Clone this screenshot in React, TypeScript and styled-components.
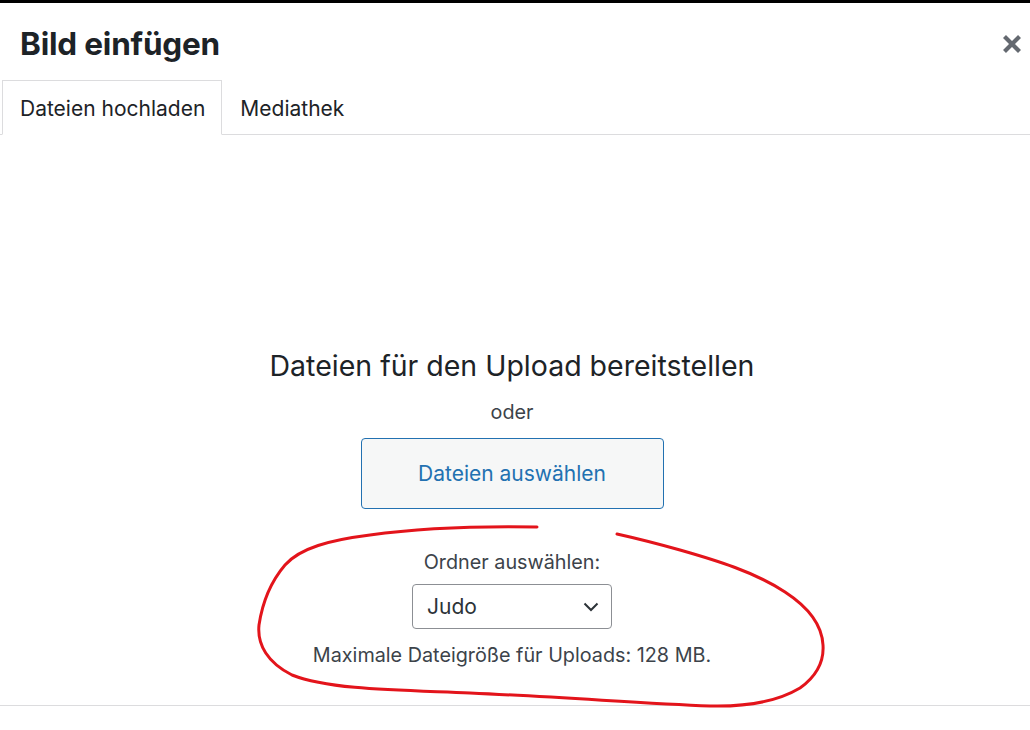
import React from "react";
import styled, { createGlobalStyle } from "styled-components";

const Global = createGlobalStyle`
  html, body { margin: 0; padding: 0; background: #fff; }
  body { font-family: Inter, "Noto Sans", "Liberation Sans", sans-serif; }
  * { box-sizing: border-box; }
`;

const Frame = styled.div`
  position: relative;
  width: 1030px;
  height: 730px;
  overflow: hidden;
  background: #fff;
  display: flex;
  flex-direction: column;
`;

const TopBar = styled.div`
  height: 3px;
  background: #000;
  flex: none;
`;

const Header = styled.header`
  height: 77px;
  flex: none;
  display: flex;
  align-items: center;
  justify-content: space-between;
  padding: 4px 5px 0 20px;
`;

const Title = styled.h1`
  margin: 0;
  font-size: 31.5px;
  font-weight: 700;
  color: #1d2327;
  letter-spacing: -0.2px;
`;

const CloseButton = styled.button`
  width: 26px;
  height: 26px;
  padding: 0;
  border: 0;
  background: transparent;
  display: flex;
  align-items: center;
  justify-content: center;
`;

const TabBar = styled.nav`
  height: 55px;
  flex: none;
  display: flex;
  padding-left: 2px;
  border-bottom: 1px solid #dcdcde;
`;

const Tab = styled.div<{ $active?: boolean }>`
  display: flex;
  align-items: center;
  padding: 2px 16px 0 17px;
  margin-bottom: ${(p) => (p.$active ? "-1px" : "0")};
  font-size: 21px;
  color: #1d2327;
  background: ${(p) => (p.$active ? "#fff" : "transparent")};
  border: 1px solid ${(p) => (p.$active ? "#dcdcde" : "transparent")};
  border-bottom: ${(p) => (p.$active ? "1px solid #fff" : "0")};
`;

const Content = styled.main`
  flex: 1;
  display: flex;
  flex-direction: column;
  align-items: center;
  padding: 213px 6px 0 0;
`;

const UploadHeading = styled.h2`
  margin: 0;
  font-size: 28.5px;
  font-weight: 400;
  color: #1d2327;
  line-height: 36px;
`;

const Small = styled.p<{ $mt?: number }>`
  margin: ${(p) => p.$mt ?? 0}px 0 0;
  font-size: 19.8px;
  line-height: 26px;
  color: #3c434a;
`;

const SelectFiles = styled.button`
  margin-top: 13px;
  width: 303px;
  height: 71px;
  border: 1px solid #2271b1;
  border-radius: 4px;
  background: #f6f7f7;
  color: #2271b1;
  font-family: inherit;
  font-size: 21px;
`;

const FolderSelect = styled.div`
  margin-top: 9px;
  width: 200px;
  height: 45px;
  border: 1px solid #8c8f94;
  border-radius: 4px;
  display: flex;
  align-items: center;
  justify-content: space-between;
  padding: 0 12px 0 14px;
  font-size: 21px;
  color: #2c3338;
`;

const Divider = styled.div`
  position: absolute;
  left: 0;
  right: 0;
  top: 705px;
  height: 1px;
  background: #dcdcde;
`;

const Annotation = styled.svg`
  position: absolute;
  left: 0;
  top: 0;
  pointer-events: none;
`;

export default function App() {
  return (
    <>
      <Global />
      <Frame>
        <TopBar />
        <Header>
          <Title>Bild einfügen</Title>
          <CloseButton aria-label="Schließen">
            <svg width="20" height="20" viewBox="0 0 20 20">
              <path d="M2.5 2.5 L17.5 17.5 M17.5 2.5 L2.5 17.5" stroke="#646970" strokeWidth="4.2" strokeLinecap="butt" />
            </svg>
          </CloseButton>
        </Header>
        <TabBar>
          <Tab $active>Dateien hochladen</Tab>
          <Tab>Mediathek</Tab>
        </TabBar>
        <Content>
          <UploadHeading>Dateien für den Upload bereitstellen</UploadHeading>
          <Small $mt={15}>oder</Small>
          <SelectFiles>Dateien auswählen</SelectFiles>
          <Small $mt={40}>Ordner auswählen:</Small>
          <FolderSelect>
            <span>Judo</span>
            <svg width="16" height="10" viewBox="0 0 16 10">
              <path d="M1.5 1.5 L8 8 L14.5 1.5" fill="none" stroke="#2c3338" strokeWidth="2" />
            </svg>
          </FolderSelect>
          <Small $mt={13}>Maximale Dateigröße für Uploads: 128 MB.</Small>
        </Content>
        <Divider />
        <Annotation width="1030" height="730" viewBox="0 0 1030 730">
          <path
            d="M537 527 C480 526 420 528 370 535 C330 540 300 548 285 565 C268 585 262 605 259 625 C257 645 268 663 292 675 C330 690 400 690 470 693 C560 697 640 703 710 706 C750 707 780 700 800 688 C818 675 824 660 823 645 C822 625 808 607 785 592 C755 572 715 560 680 550 C655 543 635 538 617 534"
            fill="none"
            stroke="#e3141b"
            strokeWidth="3"
            strokeLinecap="round"
          />
        </Annotation>
      </Frame>
    </>
  );
}
